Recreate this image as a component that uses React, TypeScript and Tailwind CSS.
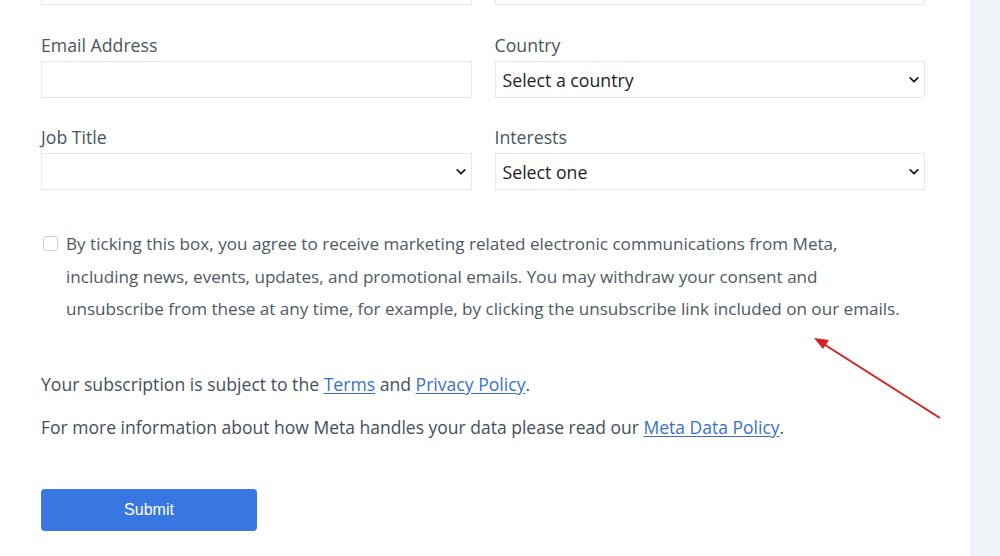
import React from "react";

const font = { fontFamily: '"Open Sans", "Liberation Sans", sans-serif' };

function Chevron() {
  return (
    <svg width="10" height="7" viewBox="0 0 10 7" className="absolute right-[5px] top-1/2 -translate-y-1/2 pointer-events-none">
      <path d="M1.2 1.4 L5 5.2 L8.8 1.4" fill="none" stroke="#1c1e21" strokeWidth="1.8" strokeLinecap="round" strokeLinejoin="round" />
    </svg>
  );
}

function Field({ label, select, value }: { label: string; select?: boolean; value?: string }) {
  return (
    <div className="flex flex-col">
      <label className="text-[17.7px] leading-[24px] text-[#4a5560] mb-[4px]">{label}</label>
      <div className="relative h-[37px] border border-[#e6e8eb] bg-white flex items-center px-[7px]">
        {select ? (
          <>
            <span className="text-[17.7px] text-[#1c1e21] translate-y-[1px]">{value}</span>
            <Chevron />
          </>
        ) : null}
      </div>
    </div>
  );
}

export default function App() {
  return (
    <div className="w-[1000px] h-[556px] overflow-hidden bg-white flex" style={font}>
      <div className="w-[970px] relative">
        <div className="pl-[41px] w-[925px]">
          <div className="grid grid-cols-2 gap-x-[23px] -mt-[33px]">
            <div className="h-[38px] border border-[#e6e8eb]" />
            <div className="h-[38px] border border-[#e6e8eb]" />
          </div>
          <div className="grid grid-cols-2 gap-x-[23px] mt-[28px]">
            <Field label="Email Address" />
            <Field label="Country" select value="Select a country" />
          </div>
          <div className="grid grid-cols-2 gap-x-[23px] mt-[27px]">
            <Field label="Job Title" select value="" />
            <Field label="Interests" select value="Select one" />
          </div>
          <div className="flex mt-[38px] pl-[2px]">
            <div className="w-[15px] h-[15px] mt-[8px] border border-[#cfd3d8] rounded-[3px] bg-white shrink-0" />
            <p className="ml-[8px] text-[17.1px] leading-[32.5px] text-[#4e5963]">
              By ticking this box, you agree to receive marketing related electronic communications from Meta,
              <br />
              including news, events, updates, and promotional emails. You may withdraw your consent and
              <br />
              unsubscribe from these at any time, for example, by clicking the unsubscribe link included on our emails.
            </p>
          </div>
          <p className="mt-[46px] text-[17.6px] leading-[24px] text-[#444f5a]">
            Your subscription is subject to the{" "}
            <a className="text-[#3a6fcf] underline underline-offset-2">Terms</a> and{" "}
            <a className="text-[#3a6fcf] underline underline-offset-2">Privacy Policy</a>.
          </p>
          <p className="mt-[19px] text-[17.5px] leading-[24px] text-[#444f5a]">
            For more information about how Meta handles your data please read our{" "}
            <a className="text-[#3a6fcf] underline underline-offset-2">Meta Data Policy</a>.
          </p>
          <button
            className="mt-[50px] w-[216px] h-[42px] rounded-[4px] bg-[#3877e2] text-white text-[16px]"
            style={{ fontFamily: '"Liberation Sans", Arial, sans-serif' }}
          >
            Submit
          </button>
        </div>
        <svg className="absolute left-[805px] top-[330px]" width="145" height="100" viewBox="805 330 145 100">
          <line x1="940" y1="418" x2="822" y2="343" stroke="#d62020" strokeWidth="2" />
          <path d="M814 338 L829 340 L823 349 Z" fill="#d62020" />
        </svg>
      </div>
      <div className="flex-1 bg-[#f0f3f7]" />
    </div>
  );
}
